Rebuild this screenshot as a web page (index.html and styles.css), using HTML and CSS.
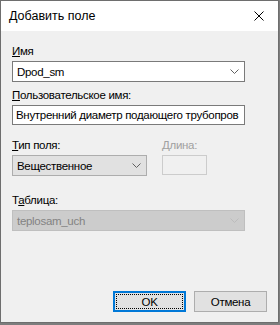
FILE: index.html
```html
<!DOCTYPE html>
<html lang="ru">
<head>
  <meta charset="UTF-8">
  <meta name="viewport" content="width=device-width, initial-scale=1.0">
  <title>Добавить поле</title>
  <link rel="stylesheet" href="styles.css">
</head>
<body>

  <div class="dialog">
    <div class="titlebar">
      <span class="title">Добавить поле</span>
      <svg class="close" width="10" height="10" viewBox="0 0 10 10">
        <path d="M0.5 0.5 L9.5 9.5 M9.5 0.5 L0.5 9.5" stroke="#000" stroke-width="1" fill="none"/>
      </svg>
    </div>

    <div class="content">
      <div class="group group-name">
        <label><u>И</u>мя</label>
        <div class="combo">
          <span>Dpod_sm</span>
          <svg class="chevron" width="9" height="5" viewBox="0 0 9 5"><path d="M0.5 0.5 L4.5 4.5 L8.5 0.5" stroke="#606060" fill="none"/></svg>
        </div>
      </div>

      <div class="group group-user">
        <label><u>П</u>ользовательское имя:</label>
        <div class="textbox">Внутренний диаметр подающего трубопров</div>
      </div>

      <div class="row group-type">
        <div class="group">
          <label><u>Т</u>ип поля:</label>
          <div class="combo combo-button">
            <span>Вещественное</span>
            <svg class="chevron" width="9" height="5" viewBox="0 0 9 5"><path d="M0.5 0.5 L4.5 4.5 L8.5 0.5" stroke="#606060" fill="none"/></svg>
          </div>
        </div>
        <div class="group group-length">
          <label class="disabled"><u>Д</u>лина:</label>
          <div class="textbox textbox-disabled"></div>
        </div>
      </div>

      <div class="group group-table">
        <label>Т<u>а</u>блица:</label>
        <div class="combo combo-disabled">
          <span>teplosam_uch</span>
          <svg class="chevron" width="9" height="5" viewBox="0 0 9 5"><path d="M0.5 0.5 L4.5 4.5 L8.5 0.5" stroke="#bcbcbc" fill="none"/></svg>
        </div>
      </div>

      <div class="buttons">
        <button class="btn btn-default"><span>OK</span></button>
        <button class="btn">Отмена</button>
      </div>
    </div>
  </div>

</body>
</html>
```

FILE: styles.css
```css
body {
  margin: 0;
  background-color: #7d7d7d;
  font-family: "Liberation Sans", "Noto Sans", sans-serif;
  font-size: 11.5px;
  letter-spacing: -0.3px;
  color: black;
}
.dialog {
  width: 279px;
  height: 323px;
  box-sizing: border-box;
  border: 1px solid #6e6e6e;
  background-color: #f0f0f0;
  display: flex;
  flex-direction: column;
}
.titlebar {
  height: 30px;
  background-color: white;
  display: flex;
  align-items: center;
  justify-content: space-between;
  padding: 0 14px 0 8px;
}
.title {
  font-size: 12.5px;
  letter-spacing: 0;
  line-height: 15px;
}
.content {
  flex: 1;
  display: flex;
  flex-direction: column;
  padding: 13px 11px 10px 11px;
}
.group {
  display: flex;
  flex-direction: column;
  gap: 2px;
}
label {
  line-height: 15px;
  height: 15px;
}
label.disabled {
  color: #a0a0a0;
}
.group-user {
  margin-top: 6px;
}
.row {
  display: flex;
  align-items: flex-start;
  gap: 15px;
}
.group-type {
  margin-top: 13px;
}
.group-table {
  margin-top: 17px;
}
.combo {
  width: 233px;
  height: 21px;
  box-sizing: border-box;
  border: 1px solid #7a7a7a;
  background-color: white;
  display: flex;
  align-items: center;
  justify-content: space-between;
  padding: 0 5px 0 4px;
}
.combo-button {
  width: 135px;
  background-color: #e1e1e1;
  border-color: #adadad;
}
.combo-disabled {
  background-color: #cccccc;
  border-color: #bfbfbf;
  color: #838383;
}
.chevron {
  display: block;
}
.textbox {
  width: 233px;
  height: 20px;
  box-sizing: border-box;
  border: 1px solid #7a7a7a;
  background-color: white;
  padding: 0 3px;
  line-height: 18px;
  white-space: nowrap;
  overflow: hidden;
}
.textbox-disabled {
  width: 45px;
  background-color: #f0f0f0;
  border-color: #cccccc;
}
.buttons {
  margin-top: auto;
  display: flex;
  justify-content: flex-end;
  gap: 8px;
}
.btn {
  width: 73px;
  height: 21px;
  box-sizing: border-box;
  border: 1px solid #adadad;
  background-color: #e1e1e1;
  font-family: inherit;
  font-size: 11.5px;
  letter-spacing: -0.3px;
  padding: 0;
  color: black;
}
.btn-default {
  border: 2px solid #0078d7;
  padding: 1px;
}
.btn-default span {
  display: flex;
  align-items: center;
  justify-content: center;
  height: 100%;
  box-sizing: border-box;
  border: 1px dotted black;
}
```
